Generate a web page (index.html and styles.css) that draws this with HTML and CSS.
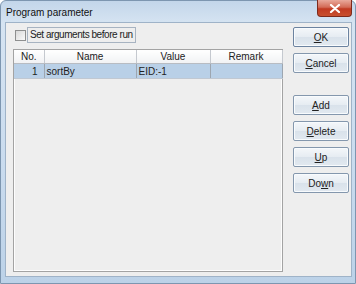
FILE: index.html
```
<!DOCTYPE html>
<html>
<head>
<meta charset="utf-8">
<link rel="stylesheet" href="styles.css">
<title>Program parameter</title>
</head>
<body>
  <div class="window">
    <div class="titlebar">
      <span class="title">Program parameter</span>
      <div class="close">
        <svg width="12" height="9" viewBox="0 0 12 9">
          <path d="M2 1 L10 8 M10 1 L2 8" stroke="#fff" stroke-width="2.2" stroke-linecap="round"/>
        </svg>
      </div>
    </div>
    <div class="client">
      <div class="main">
        <label class="check">
          <span class="box"></span>
          <span class="check-label">Set arguments before run</span>
        </label>
        <div class="pane">
          <table class="grid">
            <colgroup>
              <col class="c-no"><col class="c-name"><col class="c-value"><col class="c-remark">
            </colgroup>
            <tr class="head">
              <th>No.</th><th>Name</th><th>Value</th><th>Remark</th>
            </tr>
            <tr class="sel">
              <td class="num">1</td><td>sortBy</td><td>EID:-1</td><td></td>
            </tr>
          </table>
        </div>
      </div>
      <div class="buttons">
        <button class="btn default"><u>O</u>K</button>
        <button class="btn"><u>C</u>ancel</button>
        <button class="btn spaced"><u>A</u>dd</button>
        <button class="btn"><u>D</u>elete</button>
        <button class="btn"><u>U</u>p</button>
        <button class="btn">Do<u>w</u>n</button>
      </div>
    </div>
  </div>
</body>
</html>
```
FILE: styles.css
```
html, body { margin: 0; padding: 0; }
body { width: 356px; height: 284px; overflow: hidden; background: #fff; }

.window {
  width: 356px; height: 284px; box-sizing: border-box;
  display: flex; flex-direction: column;
  padding: 0 3px 6px 4px;
  background: linear-gradient(180deg, #c3d6ea 0%, #d6e4f2 8%, #c9dbee 60%, #bcd2e8 100%);
  border: 1px solid #7d96b0; border-radius: 6px 6px 0 0;
}
.titlebar { height: 21px; display: flex; justify-content: space-between; align-items: flex-start; }
.title {
  font-family: "Liberation Sans", Arial, sans-serif; font-size: 10px; color: #111;
  padding: 6px 0 0 1px;
}
.close {
  width: 33px; height: 16px; margin: -1px 0 0 0;
  display: flex; align-items: center; justify-content: center;
  background: linear-gradient(180deg, #e9a99b 0%, #d36b57 45%, #c13a22 55%, #c8502f 100%);
  border: 1px solid #7e2a1c; border-top: none; border-radius: 0 0 4px 4px;
}

.client {
  flex: 1; display: flex; gap: 10px;
  background: #eeeeee;
  border: 1px solid #9fb3c8;
  padding: 4px 3px 4px 7px;
  font-family: "Liberation Sans", Arial, sans-serif; font-size: 10px; color: #222;
}
.main { width: 270px; display: flex; flex-direction: column; gap: 6px; }

.check { display: flex; align-items: center; height: 16px; gap: 1px; }
.box {
  width: 9px; height: 9px; margin-left: 2px;
  border: 1px solid #8e8f8f; background: linear-gradient(135deg, #d8d8d8, #fafafa);
}
.check-label {
  border: 1px solid #a7b3c1; background: #eeeeee;
  padding: 1px 2px; height: 12px; line-height: 12px; letter-spacing: -0.45px;
}

.pane { flex: 1; border: 1px solid #a3a3a3; box-shadow: inset 0 0 0 1px #fdfdfd; background: #eeeeee; }
.grid { border-collapse: collapse; table-layout: fixed; width: 268px; }
.c-no { width: 30px; } .c-name { width: 92px; } .c-value { width: 74px; } .c-remark { width: 72px; }
.grid th {
  height: 13px; padding: 0; font-weight: normal; text-align: center;
  background: linear-gradient(180deg, #ffffff, #f1f2f4);
  border-right: 1px solid #c5c9cf; border-bottom: 1px solid #b8bcc2;
}
.grid td {
  height: 14px; padding: 0 0 0 2px; white-space: nowrap;
  border-right: 1px solid #9da6b0; border-bottom: 1px solid #c0c8d2;
}
.grid td.num { text-align: right; padding: 0 6px 0 0; }
.sel td { background: #b9d0e7; }

.buttons { width: 56px; display: flex; flex-direction: column; gap: 6px; }
.btn {
  height: 20px; width: 56px; padding: 0;
  font-family: "Liberation Sans", Arial, sans-serif; font-size: 10px; color: #222;
  border: 1px solid #8497ad; border-radius: 2px;
  background: linear-gradient(180deg, #f4f7fa 0%, #e6ecf2 50%, #d9e2eb 51%, #e2e9f0 100%);
  box-shadow: inset 0 0 0 1px #f8fbfd;
}
.btn.default { border-color: #6c83a0; }
.btn.spaced { margin-top: 16px; }
.btn u { text-decoration-thickness: 1px; text-underline-offset: 1px; }
```
